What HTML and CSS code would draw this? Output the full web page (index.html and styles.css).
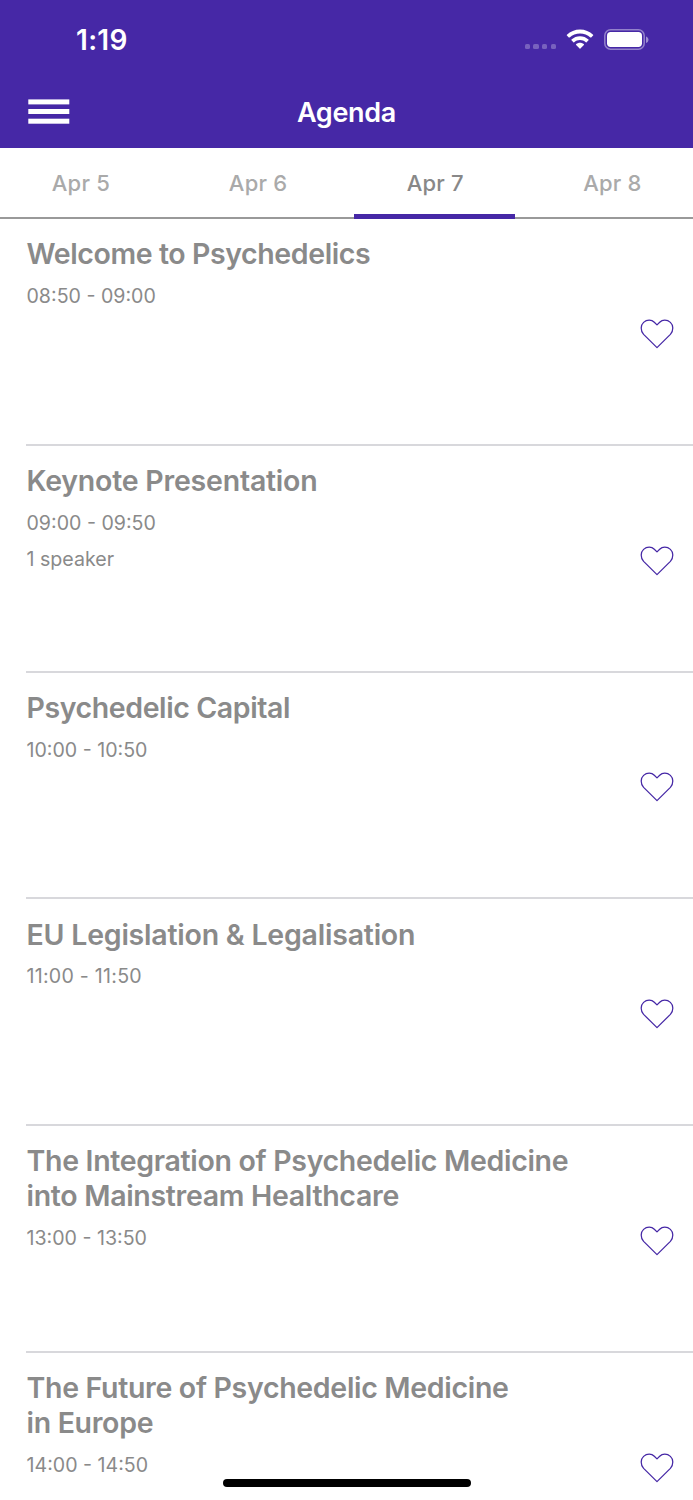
FILE: index.html
```html
<!DOCTYPE html>
<html lang="en">
<head>
<meta charset="utf-8">
<title>Agenda</title>
<link rel="stylesheet" href="styles.css">
</head>
<body>
<svg class="defs" width="0" height="0" aria-hidden="true">
  <symbol id="heart" viewBox="0 0 34 30">
    <path d="M17 28.6 L3.6 15.4 C.3 11.8 .5 6.2 3.6 3.4 C6.9 .4 11.6 .5 14.3 3.2 L17 5.9 L19.7 3.2 C22.4 .5 27.1 .4 30.4 3.4 C33.5 6.2 33.7 11.8 30.4 15.4 Z" fill="none" stroke="#4628a6" stroke-width="1.25" stroke-linejoin="round"/>
  </symbol>
</svg>
<div class="screen">
  <header class="header">
    <div class="status">
      <span class="clock">1:19</span>
      <div class="indicators">
        <div class="cellular"><i></i><i></i><i></i><i></i></div>
        <svg class="wifi" width="28" height="21" viewBox="0 0 28 21" fill="#fff">
          <path d="M14 .4 C19 .4 23.7 2.4 27.1 5.7 Q27.5 6.1 27.1 6.5 L25.2 8.4 Q24.8 8.8 24.4 8.4 C21.6 5.8 17.9 4.4 14 4.4 C10.1 4.4 6.4 5.8 3.6 8.4 Q3.2 8.8 2.8 8.4 L.9 6.5 Q.5 6.1 .9 5.7 C4.3 2.4 9 .4 14 .4 Z"/>
          <path d="M14 7.2 C17.2 7.2 20.2 8.4 22.5 10.5 Q22.9 10.9 22.5 11.3 L20.6 13.2 Q20.2 13.6 19.8 13.2 C18.2 11.8 16.2 11 14 11 C11.8 11 9.8 11.8 8.2 13.2 Q7.8 13.6 7.4 13.2 L5.5 11.3 Q5.1 10.9 5.5 10.5 C7.8 8.4 10.8 7.2 14 7.2 Z"/>
          <path d="M14 13.7 C15.4 13.7 16.8 14.2 17.9 15.2 Q18.3 15.6 17.9 16 L14.4 19.5 Q14 19.9 13.6 19.5 L10.1 16 Q9.7 15.6 10.1 15.2 C11.2 14.2 12.6 13.7 14 13.7 Z"/>
        </svg>
        <svg class="battery" width="45" height="22" viewBox="0 0 45 22">
          <rect x=".8" y=".8" width="39.4" height="19.4" rx="5.8" fill="none" stroke="#fff" stroke-opacity=".42" stroke-width="1.5"/>
          <rect x="3" y="3" width="35" height="15" rx="3.7" fill="#fff"/>
          <path d="M42 7.4 C45.3 8.7 45.3 12.7 42 14 Z" fill="#fff" fill-opacity=".48"/>
        </svg>
      </div>
    </div>
    <nav class="navbar">
      <svg class="menu" width="42" height="26" viewBox="0 0 42 26" fill="#fff">
        <rect x=".3" y=".4" width="41" height="5"/><rect x=".3" y="10" width="41" height="5"/><rect x=".3" y="19.7" width="41" height="5"/>
      </svg>
      <h1 class="page-title">Agenda</h1>
    </nav>
  </header>
  <div class="tabs">
    <div class="tab">Apr 5</div>
    <div class="tab">Apr 6</div>
    <div class="tab selected">Apr 7</div>
    <div class="tab">Apr 8</div>
  </div>
  <main class="list">
    <article class="session"><div class="info"><h2>Welcome to Psychedelics</h2><p>08:50 - 09:00</p></div><svg class="heart"><use href="#heart"/></svg></article>
    <article class="session"><div class="info"><h2 class="wide">Keynote Presentation</h2><p>09:00 - 09:50</p><p>1 speaker</p></div><svg class="heart"><use href="#heart"/></svg></article>
    <article class="session"><div class="info"><h2>Psychedelic Capital</h2><p>10:00 - 10:50</p></div><svg class="heart"><use href="#heart"/></svg></article>
    <article class="session"><div class="info"><h2 class="wide">EU Legislation &amp; Legalisation</h2><p class="loose">11:00 - 11:50</p></div><svg class="heart"><use href="#heart"/></svg></article>
    <article class="session"><div class="info"><h2 class="medium">The Integration of Psychedelic Medicine<br>into Mainstream Healthcare</h2><p>13:00 - 13:50</p></div><svg class="heart"><use href="#heart"/></svg></article>
    <article class="session"><div class="info"><h2 class="medium">The Future of Psychedelic Medicine<br>in Europe</h2><p>14:00 - 14:50</p></div><svg class="heart"><use href="#heart"/></svg></article>
  </main>
  <div class="home-indicator"></div>
</div>
</body>
</html>
```
FILE: styles.css
```css
* { box-sizing: border-box; }
body { margin: 0; background: #fff; font-family: Inter, "Liberation Sans", sans-serif; }
h1, h2, p { margin: 0; }
.defs { position: absolute; }
.screen { position: relative; width: 693px; height: 1500px; overflow: hidden; display: flex; flex-direction: column; }
.header { height: 147.5px; flex: none; background: #4628a6; color: #fff; }
.status { height: 76px; display: flex; justify-content: space-between; padding: 0 44px 0 76px; }
.clock { font-size: 28px; font-weight: 600; line-height: 34px; padding-top: 23px; letter-spacing: .3px; }
.indicators { display: flex; align-items: flex-start; padding-top: 29px; }
.cellular { display: flex; gap: 3.3px; padding-top: 14.6px; margin-right: 10px; }
.cellular i { width: 5.4px; height: 5.4px; border-radius: 1.6px; background: rgba(255,255,255,.27); }
.wifi { margin-right: 10px; }
.navbar { height: 71px; display: grid; grid-template-columns: 1fr auto 1fr; align-items: center; padding: 0 28px; }
.page-title { font-size: 27px; font-weight: 600; line-height: 36px; letter-spacing: -0.3px; padding-top: 2px; }
.tabs { height: 71.5px; flex: none; display: grid; grid-template-columns: repeat(4, 160.8px); column-gap: 16.4px; border-bottom: 2px solid #999; }
.tab { height: 71.5px; line-height: 71px; text-align: center; font-size: 22px; font-weight: 450; letter-spacing: .2px; text-indent: 1px; color: #aaa; }
.tab.selected { color: #888; font-weight: 500; border-bottom: 5px solid #4628a6; }
.list { padding-left: 26px; }
.session { height: 226.8px; display: flex; justify-content: space-between; align-items: center; border-bottom: 2px solid #d8d8dc; padding-right: 19px; }
.info { align-self: stretch; padding-top: 18.2px; padding-left: .5px; color: #8a8a8a; }
.info h2 { font-size: 28.5px; font-weight: 600; line-height: 34.7px; letter-spacing: -0.4px; white-space: nowrap; }
.info h2.wide { letter-spacing: -0.22px; }
.info h2.medium { letter-spacing: -0.31px; }
.info p { margin-top: 12.2px; font-size: 19.6px; line-height: 24px; letter-spacing: 0; }
.info p.loose { letter-spacing: .25px; }
.info p + p { margin-top: 12px; }
.heart { width: 34px; height: 30px; margin-top: 5px; flex: none; }
.home-indicator { position: absolute; left: 223px; top: 1479px; width: 248px; height: 8px; border-radius: 4px; background: #000; }
```
